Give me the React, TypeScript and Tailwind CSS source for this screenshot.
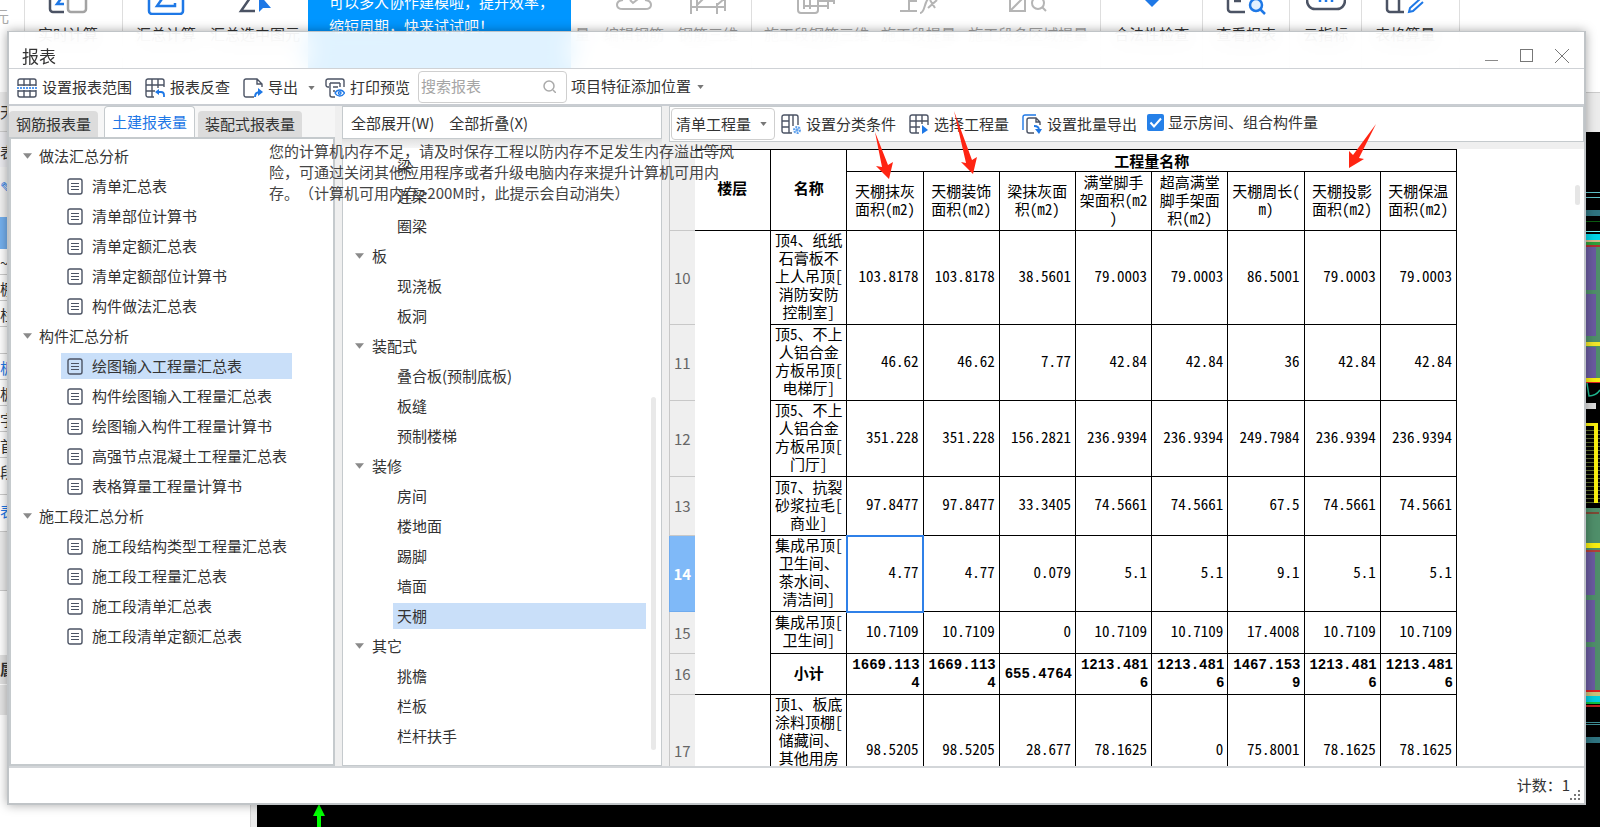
import type { ReactNode } from "react";

const reportGroups = [
  {
    title: "做法汇总分析",
    items: ["清单汇总表", "清单部位计算书", "清单定额汇总表", "清单定额部位计算书", "构件做法汇总表"],
  },
  {
    title: "构件汇总分析",
    items: [
      "绘图输入工程量汇总表",
      "构件绘图输入工程量汇总表",
      "绘图输入构件工程量计算书",
      "高强节点混凝土工程量汇总表",
      "表格算量工程量计算书",
    ],
  },
  {
    title: "施工段汇总分析",
    items: ["施工段结构类型工程量汇总表", "施工段工程量汇总表", "施工段清单汇总表", "施工段清单定额汇总表"],
  },
];

const componentGroups = [
  { title: "", items: ["梁", "连梁", "圈梁"] },
  { title: "板", items: ["现浇板", "板洞"] },
  { title: "装配式", items: ["叠合板(预制底板)", "板缝", "预制楼梯"] },
  { title: "装修", items: ["房间", "楼地面", "踢脚", "墙面", "天棚"] },
  { title: "其它", items: ["挑檐", "栏板", "栏杆扶手"] },
];

const columns = [
  "天棚抹灰\n面积(m2)",
  "天棚装饰\n面积(m2)",
  "梁抹灰面\n积(m2)",
  "满堂脚手\n架面积(m2\n)",
  "超高满堂\n脚手架面\n积(m2)",
  "天棚周长(\nm)",
  "天棚投影\n面积(m2)",
  "天棚保温\n面积(m2)",
];

const rows = [
  {
    no: 10,
    height: "h-[94px]",
    name: "顶4、纸纸\n石膏板不\n上人吊顶[\n消防安防\n控制室]",
    values: ["103.8178", "103.8178", "38.5601", "79.0003", "79.0003", "86.5001", "79.0003", "79.0003"],
  },
  {
    no: 11,
    height: "h-[76px]",
    name: "顶5、不上\n人铝合金\n方板吊顶[\n电梯厅]",
    values: ["46.62", "46.62", "7.77", "42.84", "42.84", "36", "42.84", "42.84"],
  },
  {
    no: 12,
    height: "h-[76px]",
    name: "顶5、不上\n人铝合金\n方板吊顶[\n门厅]",
    values: ["351.228", "351.228", "156.2821", "236.9394", "236.9394", "249.7984", "236.9394", "236.9394"],
  },
  {
    no: 13,
    height: "h-[59px]",
    name: "顶7、抗裂\n砂浆拉毛[\n商业]",
    values: ["97.8477", "97.8477", "33.3405", "74.5661", "74.5661", "67.5", "74.5661", "74.5661"],
  },
  {
    no: 14,
    height: "h-[76px]",
    name: "集成吊顶[\n卫生间、\n茶水间、\n清洁间]",
    values: ["4.77", "4.77", "0.079", "5.1", "5.1", "9.1", "5.1", "5.1"],
  },
  {
    no: 15,
    height: "h-[42px]",
    name: "集成吊顶[\n卫生间]",
    values: ["10.7109", "10.7109", "0", "10.7109", "10.7109", "17.4008", "10.7109", "10.7109"],
  },
  {
    no: 16,
    height: "h-[41px]",
    name: "小计",
    total: true,
    values: ["1669.1134", "1669.1134", "655.4764", "1213.4816", "1213.4816", "1467.1539", "1213.4816", "1213.4816"],
  },
  {
    no: 17,
    height: "h-[112px]",
    name: "顶1、板底\n涂料顶棚[\n储藏间、\n其他用房",
    values: ["98.5205", "98.5205", "28.677", "78.1625", "0", "75.8001", "78.1625", "78.1625"],
  },
];

const DARK = "#4b5364";
const BLUE = "#1e78e6";

function Svg({ children, w = 20, h = 20 }: { children: ReactNode; w?: number; h?: number }) {
  return (
    <svg width={w} height={h} viewBox={`0 0 ${w} ${h}`} fill="none" stroke={DARK} strokeWidth="1.4" className="shrink-0">
      {children}
    </svg>
  );
}

function RangeIcon() {
  return (
    <Svg>
      <path d="M1 8V3a2 2 0 0 1 2-2h14a2 2 0 0 1 2 2v5M1 12v5a2 2 0 0 0 2 2h14a2 2 0 0 0 2-2v-5M7 1v7M13 1v7M7 12v7M13 12v7M1 7h18M1 13h18" />
      <path d="M0 10h20" stroke={BLUE} strokeDasharray="2 1" />
    </Svg>
  );
}

function CheckBackIcon() {
  return (
    <Svg>
      <path d="M9 19H3a2 2 0 0 1-2-2V3a2 2 0 0 1 2-2h14a2 2 0 0 1 2 2v6M7 1v18M13 1v9M1 7h18M1 13h9" />
      <path d="M19 19v-2a3 3 0 0 0-3-3h-4" stroke={BLUE} strokeWidth="1.8" />
      <path d="M10 14l4-3v6z" fill={BLUE} stroke="none" />
    </Svg>
  );
}

function ExportIcon() {
  return (
    <Svg>
      <path d="M11 19H3a2 2 0 0 1-2-2V3a2 2 0 0 1 2-2h11l5 5v3M14 1v5h5" />
      <path d="M12 19c0-4 2-5 5-5" stroke={BLUE} strokeWidth="2" />
      <path d="M15 10l5 4-5 4z" fill={BLUE} stroke="none" />
    </Svg>
  );
}

function PrintIcon() {
  return (
    <Svg>
      <path d="M4 9H3a2 2 0 0 1-2-2V3a2 2 0 0 1 2-2h14a2 2 0 0 1 2 2v6M5 5h10M5 5v12a2 2 0 0 0 2 2h3M15 5v4M8 9h5M8 13h2" />
      <path d="M10 15c2.500-4 7-4 9.500 0-2.500 4-7 4-9.500 0z" stroke={BLUE} />
      <circle cx="14.700" cy="15" r="1.300" stroke={BLUE} />
    </Svg>
  );
}

function ClassifyIcon() {
  return (
    <Svg>
      <path d="M11 19H3a2 2 0 0 1-2-2V3a2 2 0 0 1 2-2h12a2 2 0 0 1 2 2v8M8 1v18M1 7h7M1 13h7M12 1v11" />
      <circle cx="16" cy="16" r="3" stroke="#5ea1ee" strokeWidth="2" strokeDasharray="2 1" />
      <circle cx="16" cy="16" r="1" stroke="#5ea1ee" />
    </Svg>
  );
}

function SelectIcon() {
  return (
    <Svg>
      <path d="M10 19H3a2 2 0 0 1-2-2V3a2 2 0 0 1 2-2h14a2 2 0 0 1 2 2v8M7 1v18M13 1v9M1 7h18M1 13h10" />
      <path d="M13 11l6 5-6 4z" fill={BLUE} stroke="none" />
    </Svg>
  );
}

function BatchIcon() {
  return (
    <Svg>
      <path d="M1 16V3a2 2 0 0 1 2-2h11" stroke={BLUE} />
      <path d="M12 19H7a2 2 0 0 1-2-2V6a2 2 0 0 1 2-2h7l4 4v3M14 4v4h4" />
      <path d="M12 12c3 0 5 1 5 4" stroke={BLUE} strokeWidth="1.800" />
      <path d="M13 15h7l-3 5z" fill={BLUE} stroke="none" />
    </Svg>
  );
}

function DocIcon() {
  return (
    <Svg w={16} h={17}>
      <rect x="1" y="1" width="14" height="15" rx="2" />
      <path d="M4 5.500h8M4 8.500h8M4 11.500h8" strokeWidth="1.200" />
    </Svg>
  );
}

function Caret({ big = false }: { big?: boolean }) {
  return (
    <svg width={big ? 9 : 7} height={big ? 6 : 4} viewBox="0 0 8 5" className="shrink-0" fill={big ? "#8a8a8a" : "#777"}>
      <path d="M0 0h8L4 5z" />
    </svg>
  );
}

function ToolButton({ icon, label }: { icon?: ReactNode; label: string }) {
  return (
    <button className="flex items-center gap-[5px] shrink-0 whitespace-nowrap">
      {icon}
      {label}
    </button>
  );
}

function RibbonItem({ label, muted = false, children }: { label: string; muted?: boolean; children?: ReactNode }) {
  return (
    <button className={`flex flex-col items-center shrink-0 whitespace-nowrap leading-4 ${muted ? "text-[#a3a3a3]" : "text-[#333]"}`}>
      <span className="h-[15px] mb-[11px]">{children}</span>
      {label}
    </button>
  );
}

function Ribbon() {
  const group = "flex items-start shrink-0 border-r border-[#dedede]";
  return (
    <header className="flex h-[92px] shrink-0 bg-white overflow-hidden">
      <div className="w-[25px] shrink-0 border-r border-[#dedede] pt-2 text-[#aaa] leading-4">
        <span className="-ml-1.5">元</span>
      </div>
      <div className={`${group} pl-[13px] pr-6`}>
        <RibbonItem label="实时计算">
          <Svg w={40} h={15}>
            <path d="M2 0v9a3 3 0 0 0 3 3h11" strokeWidth="2.500" />
            <rect x="20" y="-10" width="18" height="22" rx="3" stroke="#a3a3a3" strokeWidth="2.500" />
            <path d="M15 -4l-6 8h7" stroke={BLUE} strokeWidth="2.500" />
          </Svg>
        </RibbonItem>
      </div>
      <div className={`${group} px-[13px] gap-3.5`}>
        <RibbonItem label="汇总计算">
          <Svg w={38} h={15}>
            <path d="M2 0v11a3 3 0 0 0 3 3h28a3 3 0 0 0 3-3V0" stroke={BLUE} strokeWidth="2.500" />
            <path d="M17 -4l-7 10h18V3" stroke={BLUE} strokeWidth="2.500" />
          </Svg>
        </RibbonItem>
        <RibbonItem label="汇总选中图元">
          <Svg w={34} h={15}>
            <path d="M12 -2L3 11h14" strokeWidth="2.500" />
            <path d="M21 -6v18l4-4h8z" fill={BLUE} stroke="none" />
          </Svg>
        </RibbonItem>
        <div className="-ml-1.5 -mr-2.5 w-[263px] shrink-0 h-[88px] bg-[#0096ff] text-white pl-[21px] leading-6">
          <p className="-mt-2.5 whitespace-nowrap">可以多人协作建模啦，提升效率，</p>
          <p>缩短周期，快来试试吧！</p>
        </div>
        <RibbonItem label="量" muted />
        <RibbonItem label="编辑钢筋" muted>
          <Svg w={38} h={15}>
            <path d="M8 0c-8 1-8 9 0 9h22c8 0 8-8 0-9M15 0l3 3 5-4" stroke="#b5b5b5" strokeWidth="2" />
          </Svg>
        </RibbonItem>
        <RibbonItem label="钢筋三维" muted>
          <Svg w={38} h={15}>
            <path d="M2 0v14M8 0v11M28 3v11M36 0v11M2 7h34M8 5l6-6M28 5l7-6" stroke="#b5b5b5" strokeWidth="2" />
          </Svg>
        </RibbonItem>
      </div>
      <div className={`${group} px-3 gap-3`}>
        <RibbonItem label="施工段钢筋三维" muted>
          <Svg w={40} h={15}>
            <path d="M1 0v10a3 3 0 0 0 3 3h14a3 3 0 0 0 3-3V0M7 0v9M13 0v9M7 6h24M31 0v9M37 0v4M21 1h16" stroke="#b5b5b5" strokeWidth="2" />
          </Svg>
        </RibbonItem>
        <RibbonItem label="施工段提量" muted>
          <Svg w={40} h={15}>
            <path d="M1 11h17M10 0v11M10 1h8M21 13c5 0 4-10 8-14M29 8l9-8M31 0l5 8" stroke="#b5b5b5" strokeWidth="2" />
          </Svg>
        </RibbonItem>
        <RibbonItem label="施工段多区域提量" muted>
          <Svg w={40} h={15}>
            <path d="M2 0v11h15V0M2 11L15 -2" stroke="#b5b5b5" strokeWidth="2" />
            <circle cx="30" cy="3" r="6" stroke="#b5b5b5" strokeWidth="2" />
            <path d="M34 7l4 4" stroke="#b5b5b5" strokeWidth="2" />
          </Svg>
        </RibbonItem>
      </div>
      <div className={`${group} px-[13px]`}>
        <RibbonItem label="合法性检查">
          <Svg w={14} h={15}>
            <path d="M0 0h14L7 7z" fill={BLUE} stroke="none" />
          </Svg>
        </RibbonItem>
      </div>
      <div className={`${group} px-[13px]`}>
        <RibbonItem label="查看报表">
          <Svg w={40} h={15}>
            <path d="M2 0v9a3 3 0 0 0 3 3h14M8 1h7" strokeWidth="2.500" />
            <circle cx="30" cy="5" r="6" stroke={BLUE} strokeWidth="2.500" fill="#e3f0ff" />
            <path d="M34 9l5 5" stroke={BLUE} strokeWidth="2.500" />
          </Svg>
        </RibbonItem>
      </div>
      <div className={`${group} px-[13px]`}>
        <RibbonItem label="云指标">
          <Svg w={40} h={15}>
            <path d="M1 0c0 5 3 9 8 9h22c5 0 8-4 8-9" strokeWidth="2.500" />
            <path d="M14 0v2M20 0v2M26 0v2" stroke={BLUE} strokeWidth="2.500" />
          </Svg>
        </RibbonItem>
      </div>
      <div className={`${group} pl-[13px] pr-6`}>
        <RibbonItem label="表格算量">
          <Svg w={40} h={15}>
            <path d="M2 0v9a3 3 0 0 0 3 3h14M14 0v12" strokeWidth="2.500" />
            <path d="M35 -1L25 8l-1 4 4-1L38 2" stroke={BLUE} strokeWidth="2" />
          </Svg>
        </RibbonItem>
      </div>
    </header>
  );
}

function Sidebar() {
  return (
    <aside className="w-[251px] shrink-0 border-r border-[#d5d5d5] bg-white text-[#333] leading-4 overflow-hidden">
      <div className="h-10 bg-[#ececec] border-b border-[#ccc] pt-3">天棚</div>
      <div className="h-[35px] bg-[#ececf0] pt-3">表</div>
      <div className="h-[50px] bg-[#f2f2f2] pt-3 text-[#1e78e6]">✎</div>
      <div className="h-8 bg-[#74b0ee]" />
      <div className="h-[26px] border-b border-[#ccc] pt-1.5">~</div>
      <div className="h-[26px] border-b border-[#ccc] pt-1.5">棚</div>
      <div className="h-[26px] border-b border-[#ccc] pt-1.5">栏</div>
      <div className="h-[27px] border-b border-[#ccc]" />
      <div className="h-[26px] border-b border-[#ccc] pt-1.5 text-[#1e78e6]">板</div>
      <div className="h-[26px] border-b border-[#ccc] pt-1.5">板</div>
      <div className="h-[26px] border-b border-[#ccc] pt-1.5">字</div>
      <div className="h-[26px] border-b border-[#ccc] pt-1.5">首</div>
      <div className="h-[37px] border-b border-[#ccc] pt-1.5">段</div>
      <div className="h-9 pt-2 text-[#1e78e6]">表</div>
      <div className="h-[60px] border-y border-[#ccc] bg-[#ececec]" />
      <div className="h-16" />
      <div className="h-[29px] bg-[#e2e2e2] pt-1.5 font-bold">属</div>
      <div className="h-[31px] bg-[#e6e6e6] border-t border-white" />
    </aside>
  );
}

function CadStrip() {
  const hatch = Array.from({ length: 19 }, (_, i) => 430 + i * 4);
  return (
    <svg width="14" height="695" viewBox="0 132 14 695" className="shrink-0">
      <path d="M0 192.500h14M0 197.500h14" stroke="#5fc4cc" />
      <rect y="210" width="14" height="6" fill="#2f7480" />
      <path d="M0 221.500h14" stroke="#0b5c12" />
      <path d="M0 231.500h14" stroke="#7ff" />
      <rect y="234" width="14" height="6" fill="#00d4e6" />
      <rect y="240" width="14" height="2" fill="#d8b88a" />
      <rect y="242" width="14" height="3" fill="#2fa03a" />
      <rect y="245" width="14" height="2" fill="#b03030" />
      <rect y="247" width="14" height="136" fill="#4f8f6a" />
      <path d="M0 247h10v43H0zM0 294h10v42H0zM0 347h10v31H0z" fill="#6a5ba0" />
      <rect y="342" width="14" height="4" fill="#f2e62a" />
      <rect y="378" width="14" height="4" fill="#f7ee10" />
      <rect y="382" width="14" height="1" fill="#e02020" />
      <path d="M1 383l2 13c5 0 9-3 11-6" fill="none" stroke="#1fb890" strokeWidth="1.500" />
      <rect y="403" width="10" height="6" fill="#ddd" />
      {hatch.map((y) => (
        <path key={y} d={`M0 ${y + 0.5}h14`} stroke="#5c6a2c" />
      ))}
      <path d="M0 423h12v80H8v-77H0z" fill="#f7ee10" />
      <rect y="508" width="14" height="182" fill="#4f8f6a" />
      <path d="M0 513h13" stroke="#7d4a35" strokeWidth="2" />
      <rect y="543" width="14" height="5" fill="#f7ee10" />
      <rect y="550" width="14" height="2" fill="#b04038" />
      <path d="M0 552h9v43H0zM0 600h9v42H0zM0 647h9v43H0z" fill="#6a5ba0" />
      <rect y="690" width="14" height="2" fill="#e02020" />
      <rect y="692" width="14" height="4" fill="#c9c07a" />
      <rect y="696" width="14" height="6" fill="#00cfe0" />
      <rect y="702" width="14" height="2" fill="#10c040" />
      <rect y="705" width="14" height="2" fill="#c02020" />
      <path d="M0 722.500h14M0 724.500h14" stroke="#3f8f96" />
      <path d="M0 740h14" stroke="#2f7480" strokeWidth="6" />
    </svg>
  );
}

function ReportTree() {
  return (
    <div className="flex-1 min-h-0 bg-white border-2 border-[#c5cacd] pt-0.5 overflow-hidden">
      <ul className="w-fit">
        {reportGroups.map((group) => (
          <li key={group.title}>
            <button className="flex items-center h-[30px] pl-3 gap-[7px]">
              <Caret big />
              {group.title}
            </button>
            <ul>
              {group.items.map((item) => (
                <li key={item} className="h-[30px] flex items-center pl-[50px]">
                  <button
                    className={`flex items-center gap-[9px] w-full h-[26px] pl-1.5 pr-[5px] ${
                      item === "绘图输入工程量汇总表" ? "bg-[#c9dff9]" : ""
                    }`}
                  >
                    <DocIcon />
                    {item}
                  </button>
                </li>
              ))}
            </ul>
          </li>
        ))}
      </ul>
    </div>
  );
}

function ComponentTree() {
  return (
    <div className="flex-1 min-h-0 flex bg-white border border-t-0 border-[#c5cacd] pt-[3px] overflow-hidden">
      <ul className="flex-1">
        {componentGroups.map((group) => (
          <li key={group.title}>
            {group.title && (
              <button className="flex items-center h-[30px] pl-3 gap-2">
                <Caret big />
                {group.title}
              </button>
            )}
            <ul>
              {group.items.map((item) => (
                <li key={item} className="h-[30px] flex items-center pl-[50px]">
                  <button className={`w-full h-[26px] pl-1 text-left ${item === "天棚" ? "bg-[#c9dff9]" : ""}`}>
                    {item}
                  </button>
                </li>
              ))}
            </ul>
          </li>
        ))}
      </ul>
      <div className="w-[15px] flex flex-col justify-end pl-[5px] pb-[15px]">
        <div className="w-[5px] h-[353px] rounded-full bg-[#e9e9e9]" />
      </div>
    </div>
  );
}

function QuantityTable() {
  const cell = "border border-black p-0";
  return (
    <table className="table-fixed border-collapse w-[788px] shrink-0 self-start text-black leading-[18px] whitespace-pre-line">
      <colgroup>
        <col className="w-[25px]" />
      </colgroup>
      <thead className="[font-feature-settings:'hwid']">
        <tr className="h-[22px]">
          <th rowSpan={2} className="bg-[#efefef] border-l border-[#c8c8c8]" />
          <th rowSpan={2} className="border-y border-r border-black p-0 pb-1">楼层</th>
          <th rowSpan={2} className="border border-black p-0 pb-1">名称</th>
          <th colSpan={8} className={cell}>工程量名称</th>
        </tr>
        <tr className="h-[59px]">
          {columns.map((column) => (
            <th key={column} className="border border-black p-0 pb-0.5 font-normal">
              {column}
            </th>
          ))}
        </tr>
      </thead>
      <tbody>
        {rows.map((row) => (
          <tr key={row.no} className={row.height}>
            <th
              className={`border-y border-l p-0 ${
                row.no === 14
                  ? "bg-[#7fb9f8] border-[#6fabee] text-white"
                  : "bg-[#efefef] border-[#c8c8c8] text-[#666] font-normal"
              }`}
            >
              {row.no}
            </th>
            {row.no === 10 && <td rowSpan={7} className="border-y border-r border-black" />}
            {row.no === 17 && <td className="border-y border-r border-black" />}
            <td
              className={`border border-black text-center p-0 [font-feature-settings:'hwid'] ${
                row.no === 17 ? "align-top" : "pb-[3px]"
              } ${row.total ? "font-bold" : ""}`}
            >
              {row.name}
            </td>
            {row.values.map((value, i) => (
              <td
                key={i}
                className={`border border-black text-right p-0 ${
                  row.total
                    ? "pr-[3px] font-bold break-all text-sm leading-[18px] font-['Liberation_Mono']"
                    : "pr-1 pb-1 [font-feature-settings:'hwid']"
                } ${row.no === 14 && i === 0 ? "outline-2 -outline-offset-1 outline-[#2f80e8]" : ""}`}
              >
                {value}
              </td>
            ))}
          </tr>
        ))}
      </tbody>
    </table>
  );
}

function ReportWindow() {
  return (
    <section className="absolute top-[31px] bottom-[22px] left-[7px] right-[14px] flex flex-col border-2 border-t border-[#c0c4c7] shadow-[0_0_10px_rgba(0,0,0,0.35)] text-[#333]">
      <div className="flex items-center h-9 shrink-0 bg-white/88 backdrop-blur-md pl-[13px] pr-[15px]">
        <h1 className="flex-1 text-[17px] pt-3">报表</h1>
        <div className="flex items-center gap-[21px] pt-3">
          <button aria-label="最小化">
            <svg width="14" height="14" stroke="#8a8a8a"><path d="M0 11.500h13" /></svg>
          </button>
          <button aria-label="最大化">
            <svg width="14" height="14" stroke="#777" fill="none"><rect x="0.500" y="0.500" width="12" height="12" /></svg>
          </button>
          <button aria-label="关闭">
            <svg width="14" height="14" stroke="#777"><path d="M0 0l14 14M14 0L0 14" /></svg>
          </button>
        </div>
      </div>

      <div className="flex items-center h-9 shrink-0 bg-white border-t border-[#cfd2d6] pl-2 pt-0.5">
        <ToolButton icon={<RangeIcon />} label="设置报表范围" />
        <span className="w-[13px]" />
        <ToolButton icon={<CheckBackIcon />} label="报表反查" />
        <span className="w-[13px]" />
        <ToolButton icon={<ExportIcon />} label="导出" />
        <button aria-label="导出选项" className="px-2.5"><Caret /></button>
        <ToolButton icon={<PrintIcon />} label="打印预览" />
        <div className="flex items-center w-[149px] h-8 ml-2 -mt-0.5 pl-0.5 pr-2.5 border border-[#cfcfcf] rounded shrink-0">
          <input type="text" aria-label="搜索报表" placeholder="搜索报表" className="flex-1 min-w-0 outline-none placeholder:text-[#a5a5a5]" />
          <svg width="13" height="13" fill="none" stroke="#aaa" strokeWidth="1.500">
            <circle cx="6" cy="6" r="5" />
            <path d="M10 10l3 3" />
          </svg>
        </div>
        <button className="flex items-center gap-1.5 ml-1 -mt-0.5 whitespace-nowrap">
          项目特征添加位置
          <Caret />
        </button>
      </div>

      <div className="flex flex-1 min-h-0 bg-[#efefef] border-t-2 border-[#c9cdd2]">
        <div className="flex flex-col w-[326px] shrink-0">
          <div className="flex items-end h-[31px] shrink-0 bg-[#f6f6f6]">
            <button className="h-[26px] px-[7px] rounded-t bg-[#dcdcdc] whitespace-nowrap">钢筋报表量</button>
            <button className="h-[31px] px-[7px] ml-1.5 rounded-t bg-white border border-b-0 border-[#c5cacd] text-[#1e78e6] whitespace-nowrap">
              土建报表量
            </button>
            <button className="h-[26px] px-[7px] ml-[3px] rounded-t bg-[#dcdcdc] whitespace-nowrap">装配式报表量</button>
          </div>
          <ReportTree />
        </div>

        <div className="flex flex-col w-80 shrink-0 ml-[7px]">
          <div className="flex items-center gap-[15px] h-[33px] shrink-0 bg-white border border-[#c5cacd] pl-2 pt-0.5">
            <button>全部展开(W)</button>
            <button>全部折叠(X)</button>
          </div>
          <div className="h-[9px] shrink-0 bg-gradient-to-b from-[#e0e0e0] to-[#f5f5f5]" />
          <ComponentTree />
        </div>

        <div className="flex flex-col flex-1 min-w-0 ml-[7px]">
          <div className="flex items-center h-9 shrink-0 bg-white border border-[#c5cacd] pl-px">
            <div className="relative flex items-center shrink-0">
              <select aria-label="工程量类型" className="appearance-none w-[104px] h-8 pl-1 border border-[#cfcfcf] rounded bg-white">
                <option>清单工程量</option>
              </select>
              <span className="absolute right-2 pointer-events-none"><Caret /></span>
            </div>
            <span className="w-1.5" />
            <ToolButton icon={<ClassifyIcon />} label="设置分类条件" />
            <span className="w-[13px]" />
            <ToolButton icon={<SelectIcon />} label="选择工程量" />
            <span className="w-[13px]" />
            <ToolButton icon={<BatchIcon />} label="设置批量导出" />
            <label className="flex items-center gap-1 ml-2.5 -mt-1 whitespace-nowrap">
              <span className="relative flex">
                <input type="checkbox" defaultChecked className="appearance-none size-[17px] rounded-xs bg-[#2580e8]" />
                <svg width="17" height="17" className="absolute pointer-events-none" fill="none" stroke="#fff" strokeWidth="2">
                  <path d="M3.500 8.500l3.500 4 7-8" />
                </svg>
              </span>
              显示房间、组合构件量
            </label>
          </div>
          <div className="flex flex-1 min-h-0 mt-[7px] bg-white overflow-hidden">
            <QuantityTable />
            <div className="flex-1" />
            <div className="w-[5px] h-5 mt-9 mr-1 rounded-full bg-[#e6e6e6]" />
          </div>
        </div>
      </div>

      <footer className="flex items-center justify-end h-[37px] shrink-0 bg-white border-t-2 border-[#d3d6d9] pr-[3px]">
        <span>计数：1</span>
        <svg width="11" height="11" fill="#777" className="self-end mb-0.5">
          <path d="M8 0h2v2H8zM4 4h2v2H4zM8 4h2v2H8zM0 8h2v2H0zM4 8h2v2H4zM8 8h2v2H8z" />
        </svg>
      </footer>
    </section>
  );
}

export default function App() {
  return (
    <main className="relative flex flex-col h-screen overflow-hidden bg-white text-[15px] font-['Noto_Sans_CJK_SC',sans-serif]">
      <Ribbon />
      <div className="flex flex-1 min-h-0">
        <Sidebar />
        <div className="flex flex-col flex-1 bg-[#ececec] border-t border-[#ccc]">
          <div className="h-[39px] shrink-0" />
          <div className="relative flex flex-1 min-h-0 justify-end items-start ml-1.5 bg-black overflow-hidden">
            <CadStrip />
            <svg width="14" height="23" className="absolute left-[55px] bottom-0" fill="#00ff00">
              <path d="M7 0l6 12H9v11H5V12H1z" />
            </svg>
          </div>
        </div>
      </div>

      <ReportWindow />

      <p className="absolute left-[269px] top-[140px] leading-[21px] whitespace-pre-line text-[#444] pointer-events-none [text-spacing-trim:space-all]">
        {"您的计算机内存不足，请及时保存工程以防内存不足发生内存溢出等风\n险，可通过关闭其他应用程序或者升级电脑内存来提升计算机可用内\n存。（计算机可用内存>200M时，此提示会自动消失）"}
      </p>

      {/* pointers to the ceiling columns */}
      <svg className="absolute inset-0 w-full h-full pointer-events-none" fill="#ff2412">
        <path d="M875 132l13 33 5-3-4 17-13-13 6 1z" />
        <path d="M954 111l18 49 5-3-4 17-12-12 5 1z" />
        <path d="M1376 124l-17 34 5 1-15 9v-17l4 4z" />
      </svg>
    </main>
  );
}
